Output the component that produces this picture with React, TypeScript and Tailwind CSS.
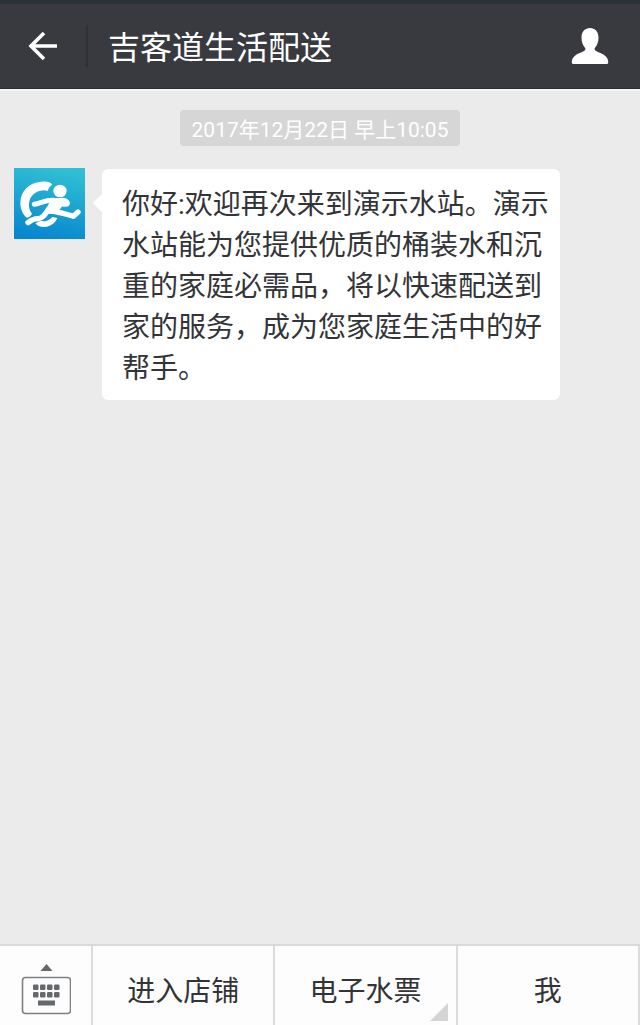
import type { ReactNode } from "react"

const message =
  "你好:欢迎再次来到演示水站。演示水站能为您提供优质的桶装水和沉重的家庭必需品，将以快速配送到家的服务，成为您家庭生活中的好帮手。"

const menuItems = [
  { label: "进入店铺", hasSubmenu: false },
  { label: "电子水票", hasSubmenu: true },
  { label: "我", hasSubmenu: false },
]

function BackIcon() {
  return (
    <svg viewBox="0 0 30 30" className="h-[30px] w-[30px]" fill="none" stroke="#fff" strokeWidth="3.6" aria-hidden="true">
      <path d="M29 15H3M16 2 3 15l13 13" />
    </svg>
  )
}

function ProfileIcon() {
  return (
    <svg viewBox="0 0 38 38" className="h-[38px] w-[38px]" fill="#fff" aria-hidden="true">
      <path d="M19 1c5 0 8.500 3.800 8.500 9.500 0 4.500-1.300 7.700-3.500 10.200-.9 1.200-.4 2.500 1 3.300 3 1.700 7 2.600 9.800 5.400 2 2 2.700 4.600 2.400 6.300-.2.900-.9 1.300-1.800 1.300H2.600c-.9 0-1.600-.4-1.800-1.300-.3-1.700.4-4.300 2.400-6.300C6 26.600 10 25.700 13 24c1.400-.8 1.900-2.100 1-3.300-2.200-2.500-3.500-5.700-3.500-10.200C10.500 4.800 14 1 19 1Z" />
    </svg>
  )
}

function ShopLogo() {
  return (
    <svg viewBox="0 0 213 213" className="h-[71px] w-[71px] shrink-0" role="img" aria-label="吉客道">
      <defs>
        <linearGradient id="sky" x1="0.6" y1="0" x2="0.4" y2="1">
          <stop offset="0" stopColor="#2fc0d4" />
          <stop offset="1" stopColor="#0787cf" />
        </linearGradient>
      </defs>
      <rect width="213" height="213" fill="url(#sky)" />
      {/* ring */}
      <path
        d="M115 50C110 42 96 39 82 41 44 44 19 70 19 105c0 18 7 33 19 44 8-1 13-6 16-12-6-8-10-17-9-30 2-23 19-38 43-40 5 0 9 1 13 2 2-8 6-14 14-19Z"
        fill="#fff"
      />
      <path d="M64 166c8-3 13-7 18-7 14 2 25-2 33-12l15 3c-8 17-20 25-37 27-13 1-24-3-29-11Z" fill="#fff" />
      {/* runner */}
      <ellipse cx="138" cy="69" rx="20" ry="19" fill="#fff" />
      <g fill="none" stroke="#fff" strokeLinecap="round" strokeLinejoin="round">
        <path d="M61 109c18-3 32-13 57-12" strokeWidth="15" />
        <path d="M142 96c13-1 20 5 19 11-3 6-12 3-20 0" strokeWidth="13" />
        <path d="M113 129c22 5 41 8 65 16l14-13" strokeWidth="16" />
        <path d="M103 124C93 140 84 154 71 152c-13 0-18 3-29 12" strokeWidth="16" />
      </g>
      <path d="m110 90 38 1-3 23-17 24-38-1 15-31Z" fill="#fff" />
    </svg>
  )
}

function KeyboardIcon() {
  return (
    <svg viewBox="0 0 50 52" className="h-[52px] w-[50px]" fill="#65696c" aria-hidden="true">
      <path d="m25.500 0 6 7h-12Z" />
      <rect x="1.500" y="13.500" width="48" height="36" rx="3" fill="none" stroke="#7d8184" strokeWidth="1.600" />
      {[12, 19, 26, 33].map((x) => (
        <g key={x}>
          <rect x={x} y="20.500" width="5.500" height="5.500" rx="1.200" />
          <rect x={x} y="28" width="5.500" height="5.500" rx="1.200" />
        </g>
      ))}
      <rect x="17" y="36.500" width="17" height="5" />
    </svg>
  )
}

function MenuButton({ children, hasSubmenu }: { children: ReactNode; hasSubmenu: boolean }) {
  return (
    <button type="button" className="relative flex-1 border-r-2 border-[#dcdcdc] pt-3 text-[28px] leading-10">
      {children}
      {hasSubmenu && (
        <svg viewBox="0 0 18 18" className="absolute right-2 bottom-1 h-[18px] w-[18px]" fill="#d5d5d5" aria-hidden="true">
          <path d="M18 0v18H0Z" />
        </svg>
      )}
    </button>
  )
}

export default function App() {
  return (
    <div className="flex min-h-screen flex-col bg-[#ebebeb] font-[Roboto,'Noto_Sans_CJK_SC',sans-serif] text-[#333438]">
      <header className="flex h-[89px] items-center border-t-4 border-b border-t-[#2b3338] border-b-[#2d2e32] bg-[#393a3f] text-white">
        <button type="button" aria-label="返回" className="flex h-full w-[86px] items-center justify-center">
          <BackIcon />
        </button>
        <div className="h-[42px] w-[2px] bg-[#2d3237]" />
        <h1 className="flex-1 pt-1 pl-5 text-[32px] leading-10">吉客道生活配送</h1>
        <button type="button" aria-label="公众号资料" className="mr-[31px]">
          <ProfileIcon />
        </button>
      </header>

      <main className="flex-1 border-t-2 border-[#f6f6f6] pt-[19px]">
        <div className="flex justify-center">
          <time dateTime="2017-12-22T10:05" className="rounded bg-[#d6d6d6] px-3 pt-1 text-[21px] leading-8 text-white">
            2017年12月22日 早上10:05
          </time>
        </div>

        <div className="mt-[22px] flex items-start pl-[14px]">
          <ShopLogo />
          <svg viewBox="0 0 9 18" className="mt-[26px] ml-2 h-[18px] w-[9px] shrink-0" fill="#fff" aria-hidden="true">
            <path d="M9 0v18L0 9Z" />
          </svg>
          <p className="mt-px mr-4 max-w-[458px] rounded-md bg-white pt-[15px] pr-2 pb-[11px] pl-5 text-[28px] leading-[41px]">
            {message}
          </p>
        </div>
      </main>

      <footer className="flex h-[81px] border-t-2 border-[#d9d9d9] bg-[#fdfdfd]">
        <button type="button" aria-label="切换键盘" className="flex w-[93px] items-center justify-center border-r-2 border-[#dcdcdc] pt-2">
          <KeyboardIcon />
        </button>
        {menuItems.map((item) => (
          <MenuButton key={item.label} hasSubmenu={item.hasSubmenu}>
            {item.label}
          </MenuButton>
        ))}
      </footer>
    </div>
  )
}
